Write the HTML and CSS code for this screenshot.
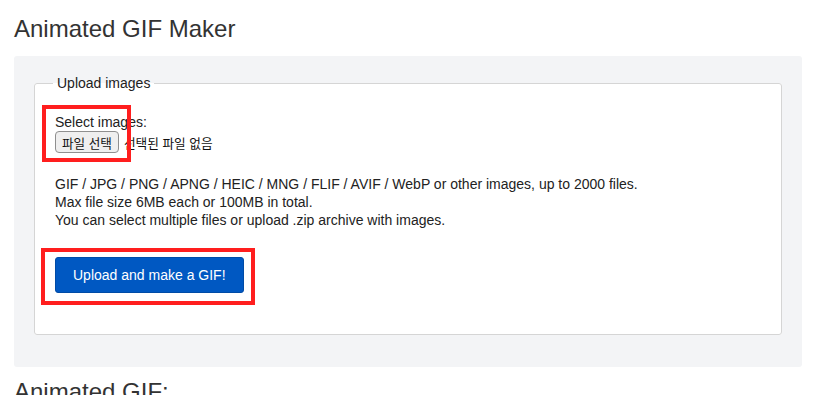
FILE: index.html
```html
<!DOCTYPE html>
<html lang="ko">
<head>
    <meta charset="UTF-8">
    <meta name="viewport" content="width=device-width, initial-scale=1.0">
    <title>Animated GIF Maker</title>
    <link rel="stylesheet" href="styles.css">
</head>
<body>
    <div class="page">
        <h1 class="title">Animated GIF Maker</h1>

        <div class="panel">
            <form class="upload-form">
                <fieldset class="upload-box">
                    <legend>Upload images</legend>

                    <div class="field marked">
                        <label class="field-label" for="new-image">Select images:</label>
                        <div class="file-row">
                            <button type="button" class="file-btn" id="new-image">파일 선택</button>
                            <span class="file-status">선택된 파일 없음</span>
                        </div>
                    </div>

                    <p class="hint">
                        GIF / JPG / PNG / APNG / HEIC / MNG / FLIF / AVIF / WebP or other images, up to 2000 files.<br>
                        Max file size 6MB each or 100MB in total.<br>
                        You can select multiple files or upload .zip archive with images.
                    </p>

                    <div class="submit-wrap marked">
                        <button type="submit" class="submit-btn">Upload and make a GIF!</button>
                    </div>
                </fieldset>
            </form>
        </div>

        <h2 class="subtitle">Animated GIF:</h2>
    </div>
</body>
</html>
```
FILE: styles.css
```css
body {
    margin: 0;
    font-family: "Liberation Sans", Arial, "Noto Sans CJK KR", sans-serif;
    color: #222222;
    background-color: #ffffff;
}
.page {
    margin: 0 22px 0 14px;
}
.title,
.subtitle {
    font-size: 24px;
    font-weight: normal;
    line-height: 28px;
    color: #333333;
}
.title {
    margin: 15px 0 13px;
}
.subtitle {
    margin: 11px 0 0;
}
.panel {
    background-color: #f3f4f6;
    border-radius: 3px;
    padding: 19px 20px 32px;
}
.upload-form {
    margin: 0;
}
.upload-box {
    margin: 0;
    min-width: 0;
    padding: 23px 20px 41px;
    border: 1px solid #d5d5d5;
    border-radius: 3px;
    background-color: #ffffff;
}
.upload-box legend {
    margin-left: -2px;
    padding: 0 4px;
    font-size: 14px;
    line-height: 16px;
}
.field {
    position: relative;
}
.field-label {
    display: block;
    font-size: 14px;
    line-height: 16px;
}
.file-row {
    display: flex;
    align-items: center;
    gap: 5px;
    margin-top: 1px;
}
.file-btn {
    height: 22px;
    padding: 0 6px;
    border: 1px solid #8f8f8f;
    border-radius: 4px;
    background-color: #efefef;
    color: #111111;
    font-family: "Noto Sans CJK KR", sans-serif;
    font-size: 12.6px;
}
.file-status {
    font-family: "Noto Sans CJK KR", sans-serif;
    font-size: 12.7px;
    color: #111111;
}
.hint {
    margin: 22px 0 0;
    font-size: 14px;
    line-height: 18px;
}
.submit-wrap {
    position: relative;
    margin-top: 28px;
}
.submit-btn {
    height: 36px;
    padding: 0 17px;
    border: 1px solid #004ba6;
    border-radius: 3px;
    background-color: #0058c2;
    color: #ffffff;
    font-family: "Liberation Sans", Arial, sans-serif;
    font-size: 14px;
    cursor: pointer;
}
.submit-btn:hover {
    background-color: #004eae;
}

/* red highlight boxes drawn over the form */
.marked::after {
    content: "";
    position: absolute;
    top: -9px;
    height: 57px;
    border: 4px solid #ff1e1e;
    box-sizing: border-box;
    pointer-events: none;
}
.field::after {
    left: -13px;
    width: 89px;
}
.submit-wrap::after {
    left: -14px;
    width: 214px;
}
```
